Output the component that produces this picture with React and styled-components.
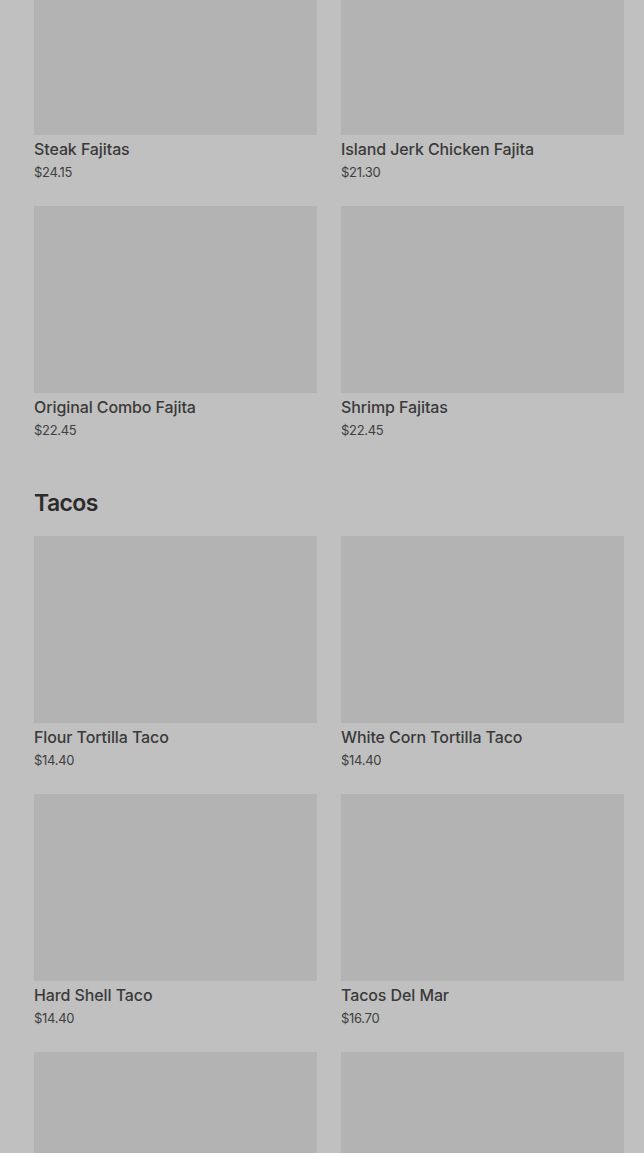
import styled, { createGlobalStyle } from "styled-components";

const GlobalStyle = createGlobalStyle`
  html, body {
    margin: 0;
    padding: 0;
    background: #c0c0c0;
    overflow: hidden;
  }
  body {
    font-family: Inter, "Noto Sans", sans-serif;
  }
`;

const Page = styled.div`
  padding: 0 20px 0 34px;
  margin-top: -52px;
  height: 1205px;
  overflow: hidden;
`;

const Section = styled.section`
  & + & {
    margin-top: 48px;
  }
`;

const Heading = styled.h2`
  margin: 0 0 17px;
  font-size: 23px;
  line-height: 32px;
  font-weight: 600;
  letter-spacing: -0.6px;
  color: #2b2b2b;
`;

const Grid = styled.div`
  display: grid;
  grid-template-columns: 283px 283px;
  column-gap: 24px;
  row-gap: 25px;
`;

const Card = styled.div`
  display: flex;
  flex-direction: column;
`;

const Photo = styled.div`
  height: 187px;
  background: #b3b3b3;
`;

const Name = styled.div`
  margin-top: 4px;
  font-size: 16px;
  line-height: 20px;
  font-weight: 500;
  letter-spacing: -0.1px;
  color: #3a3a3a;
`;

const Price = styled.div`
  margin-top: 4px;
  font-size: 13px;
  line-height: 18px;
  letter-spacing: -0.3px;
  color: #3f3f3f;
`;

const menu = [
  {
    title: null,
    items: [
      ["Steak Fajitas", "$24.15"],
      ["Island Jerk Chicken Fajita", "$21.30"],
      ["Original Combo Fajita", "$22.45"],
      ["Shrimp Fajitas", "$22.45"],
    ],
  },
  {
    title: "Tacos",
    items: [
      ["Flour Tortilla Taco", "$14.40"],
      ["White Corn Tortilla Taco", "$14.40"],
      ["Hard Shell Taco", "$14.40"],
      ["Tacos Del Mar", "$16.70"],
      ["", ""],
      ["", ""],
    ],
  },
];

export default function App() {
  return (
    <>
      <GlobalStyle />
      <Page>
        {menu.map((section, i) => (
          <Section key={i}>
            {section.title && <Heading>{section.title}</Heading>}
            <Grid>
              {section.items.map(([name, price], j) => (
                <Card key={j}>
                  <Photo />
                  <Name>{name}</Name>
                  <Price>{price}</Price>
                </Card>
              ))}
            </Grid>
          </Section>
        ))}
      </Page>
    </>
  );
}
